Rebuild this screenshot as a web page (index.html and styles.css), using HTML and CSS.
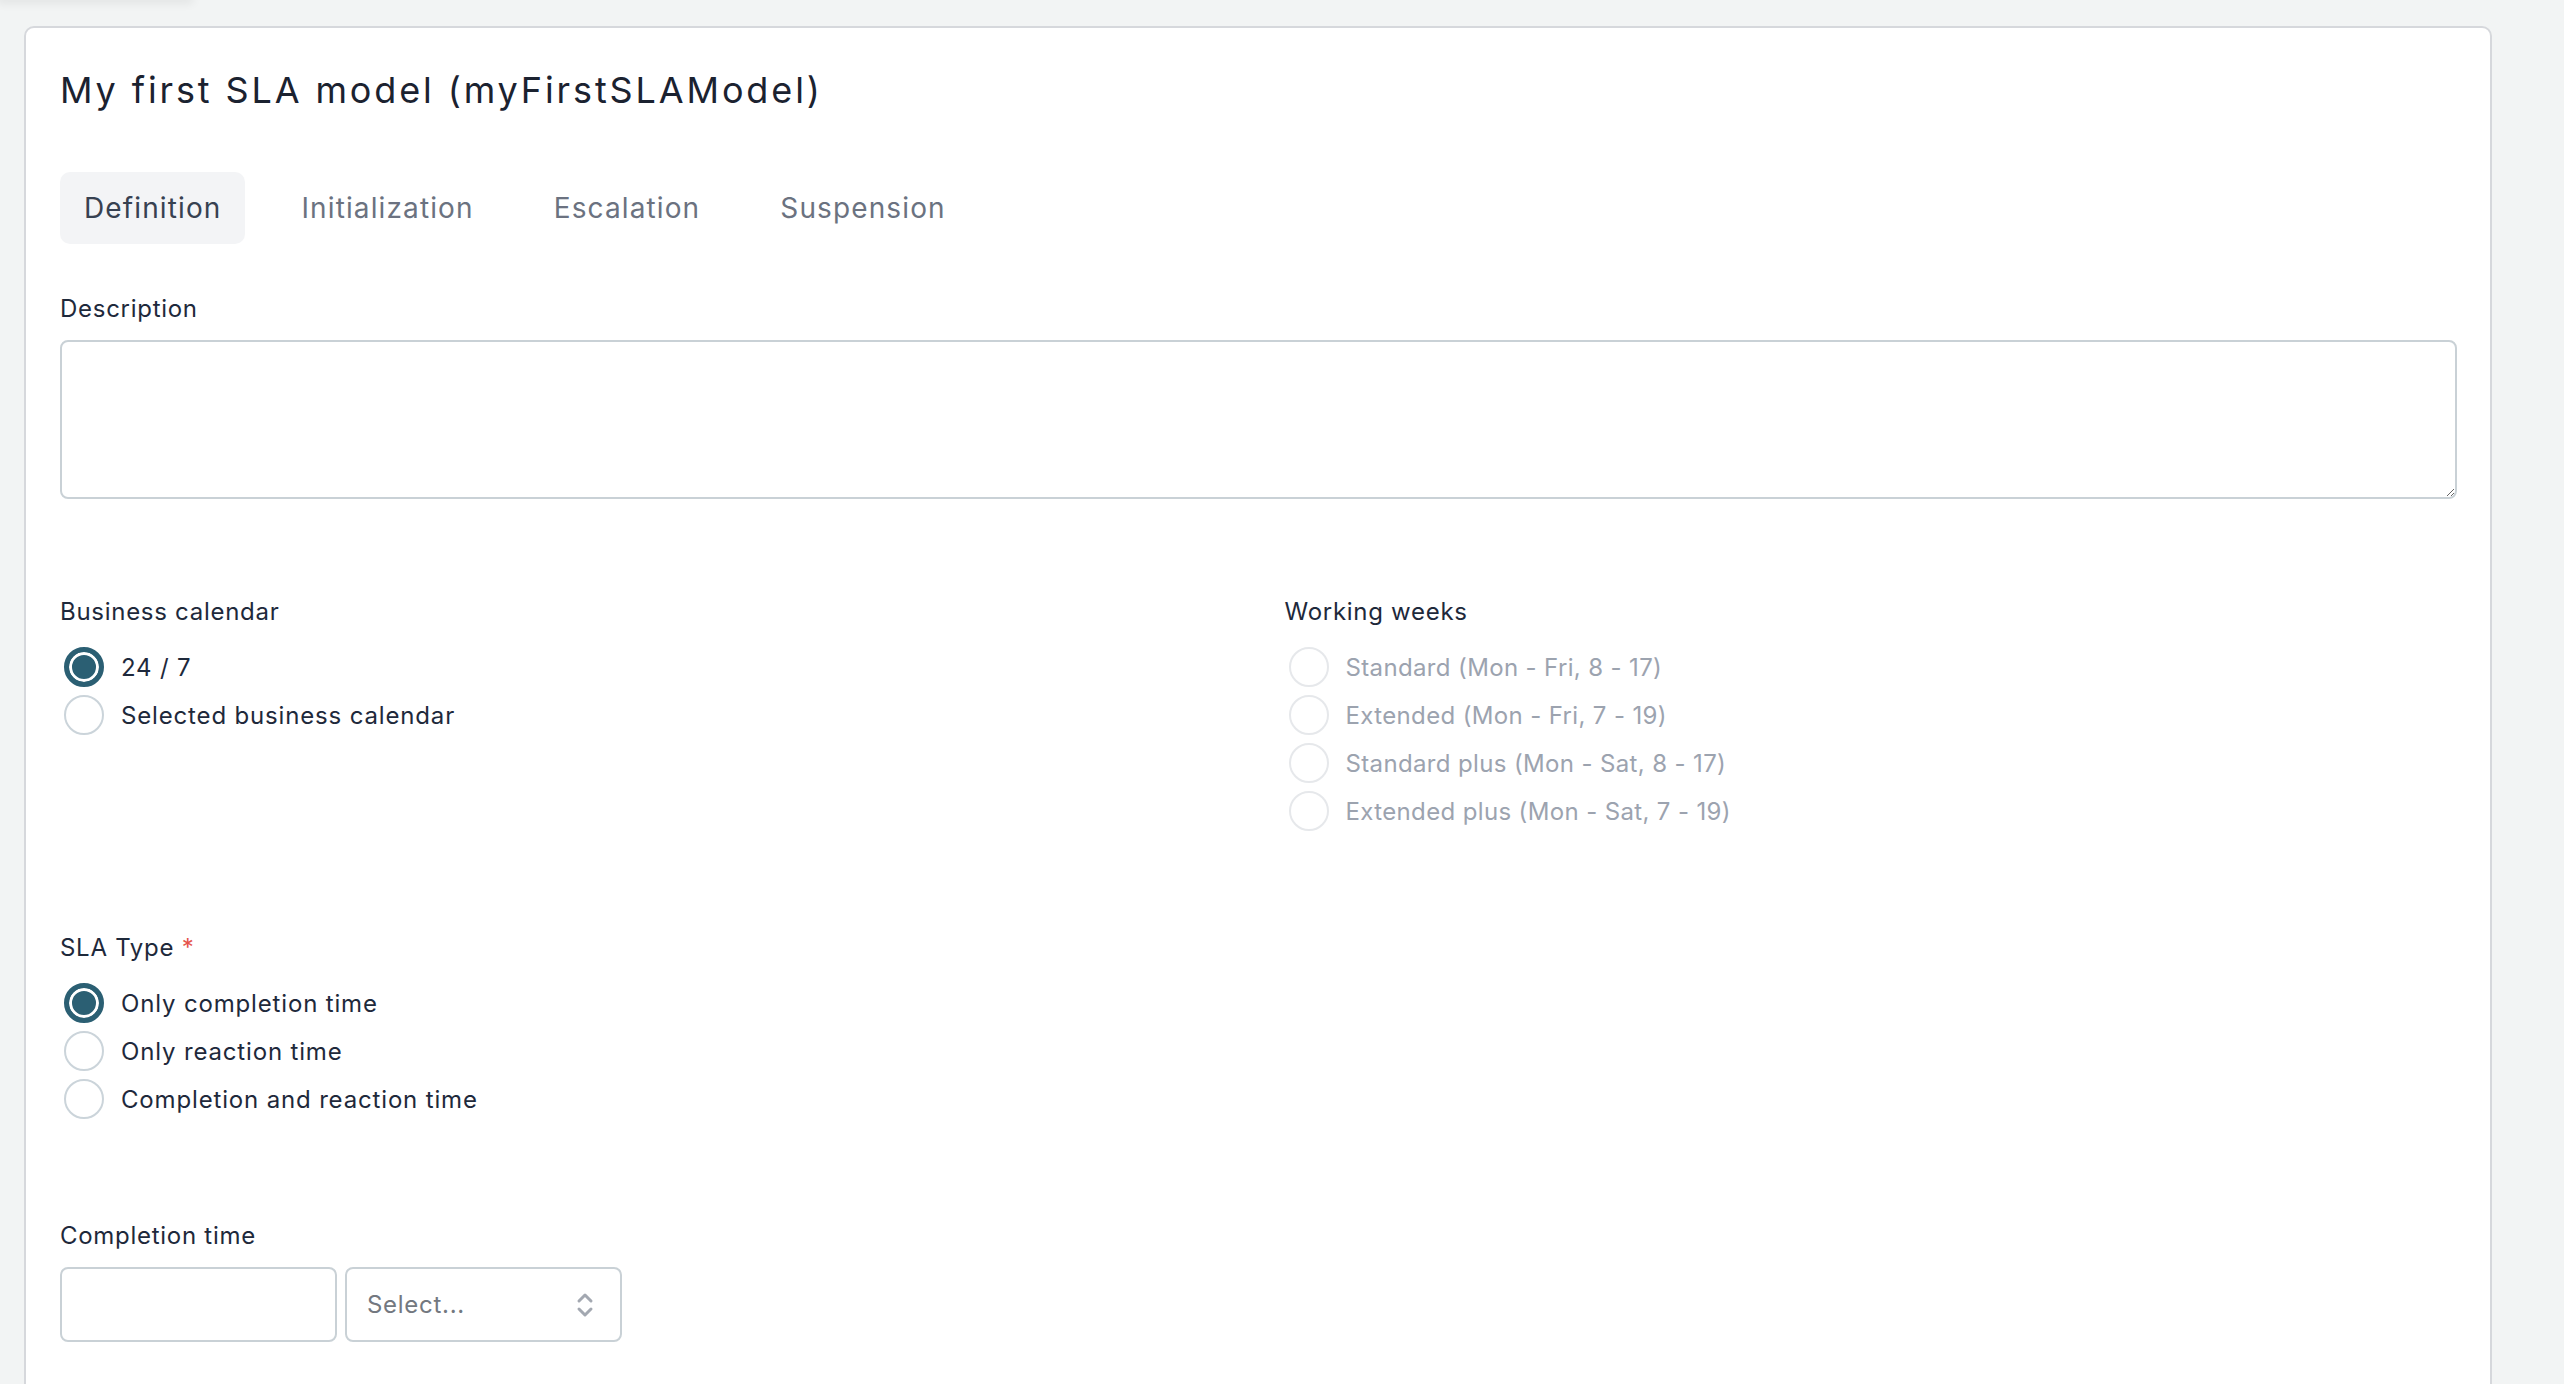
FILE: index.html
```html
<!DOCTYPE html>
<html lang="en">
<head>
  <meta charset="UTF-8" />
  <meta name="viewport" content="width=device-width, initial-scale=1.0"/>
  <title>My first SLA model</title>
  <link rel="stylesheet" href="styles.css">
</head>
<body>
  <div class="topbar"></div>

  <div class="card">
    <h1>My first SLA model (myFirstSLAModel)</h1>

    <div class="tabs">
      <div class="tab active">Definition</div>
      <div class="tab">Initialization</div>
      <div class="tab">Escalation</div>
      <div class="tab">Suspension</div>
    </div>

    <div class="fields">
      <div class="field">
        <label class="label" for="description">Description</label>
        <textarea id="description" class="textarea"></textarea>
      </div>

      <div class="columns">
        <div class="field">
          <div class="label">Business calendar</div>
          <label class="radio"><input type="radio" name="calendar" checked> 24 / 7</label>
          <label class="radio"><input type="radio" name="calendar"> Selected business calendar</label>
        </div>
        <div class="field">
          <div class="label">Working weeks</div>
          <label class="radio disabled"><input type="radio" name="weeks" disabled> Standard (Mon - Fri, 8 - 17)</label>
          <label class="radio disabled"><input type="radio" name="weeks" disabled> Extended (Mon - Fri, 7 - 19)</label>
          <label class="radio disabled"><input type="radio" name="weeks" disabled> Standard plus (Mon - Sat, 8 - 17)</label>
          <label class="radio disabled"><input type="radio" name="weeks" disabled> Extended plus (Mon - Sat, 7 - 19)</label>
        </div>
      </div>

      <div class="field">
        <div class="label">SLA Type <span class="required">*</span></div>
        <label class="radio"><input type="radio" name="type" checked> Only completion time</label>
        <label class="radio"><input type="radio" name="type"> Only reaction time</label>
        <label class="radio"><input type="radio" name="type"> Completion and reaction time</label>
      </div>

      <div class="field">
        <div class="label">Completion time</div>
        <div class="time-row">
          <input type="text" class="input">
          <div class="select-wrap">
            <select class="select">
              <option>Select...</option>
              <option>Minutes</option>
              <option>Hours</option>
              <option>Days</option>
            </select>
            <svg class="select-icon" width="18" height="28" viewBox="0 0 18 28">
              <path d="M3 10 L9 4 L15 10" fill="none" stroke="#a3a8b1" stroke-width="3" stroke-linecap="round" stroke-linejoin="round"/>
              <path d="M3 18 L9 24 L15 18" fill="none" stroke="#a3a8b1" stroke-width="3" stroke-linecap="round" stroke-linejoin="round"/>
            </svg>
          </div>
        </div>
      </div>
    </div>
  </div>
</body>
</html>
```

FILE: styles.css
```css
body {
  font-family: 'Inter', 'Noto Sans', sans-serif;
  background: #f2f4f4;
  color: #1e293b;
  margin: 0;
  padding: 0 72px 0 24px;
}
.topbar {
  width: 190px;
  height: 2px;
  background: #e6e8e9;
  box-shadow: 0 0 10px 3px rgba(0, 0, 0, 0.08);
  margin: -2px 0 26px -24px;
}
.card {
  background: #fff;
  border: 2px solid #d6d8dc;
  border-radius: 10px;
  padding: 40px 33px 120px 34px;
}
h1 {
  margin: 0;
  font-size: 36px;
  line-height: 44px;
  font-weight: 400;
  letter-spacing: 0.08em;
  color: #1b2230;
}
.tabs {
  display: flex;
  gap: 32px;
  margin-top: 60px;
}
.tab {
  height: 72px;
  line-height: 72px;
  padding: 0 24px;
  font-size: 28px;
  letter-spacing: 0.04em;
  color: #6b7280;
  border-radius: 10px;
}
.tab.active {
  background: #f3f4f6;
  color: #374151;
}
.fields {
  display: flex;
  flex-direction: column;
  gap: 95px;
  margin-top: 47px;
}
.field {
  display: flex;
  flex-direction: column;
}
.label {
  font-size: 24px;
  line-height: 36px;
  letter-spacing: 0.03em;
  margin-bottom: 13px;
  color: #1e293b;
}
.required {
  color: #e5534b;
}
.textarea {
  height: 159px;
  box-sizing: border-box;
  border: 2px solid #c9d1d6;
  border-radius: 8px;
  resize: vertical;
  font: inherit;
  font-size: 24px;
  padding: 12px 16px;
}
.columns {
  display: grid;
  grid-template-columns: 1fr 1fr;
  gap: 52px;
}
.radio {
  display: flex;
  align-items: center;
  gap: 17px;
  height: 48px;
  padding-left: 4px;
  font-size: 24px;
  letter-spacing: 0.035em;
  color: #1e293b;
}
.radio input {
  appearance: none;
  -webkit-appearance: none;
  width: 40px;
  height: 40px;
  margin: 0;
  box-sizing: border-box;
  border: 2px solid #cbd4da;
  border-radius: 50%;
  background: #fff;
}
.radio input:checked {
  border: 5px solid #2b5f73;
  background: #2b5f73;
  box-shadow: inset 0 0 0 3px #fff;
}
.radio.disabled {
  color: #9ca3af;
  letter-spacing: 0.015em;
}
.radio.disabled input {
  border-color: #e6e8eb;
}
.time-row {
  display: flex;
  gap: 8px;
}
.input, .select {
  width: 277px;
  height: 75px;
  box-sizing: border-box;
  border: 2px solid #c9d1d6;
  border-radius: 8px;
  background: #fff;
  font: inherit;
  font-size: 24px;
}
.select-wrap {
  position: relative;
}
.select {
  appearance: none;
  -webkit-appearance: none;
  padding: 0 20px;
  color: #737880;
  letter-spacing: 0.03em;
}
.select-icon {
  position: absolute;
  right: 28px;
  top: 24px;
  pointer-events: none;
}
```
